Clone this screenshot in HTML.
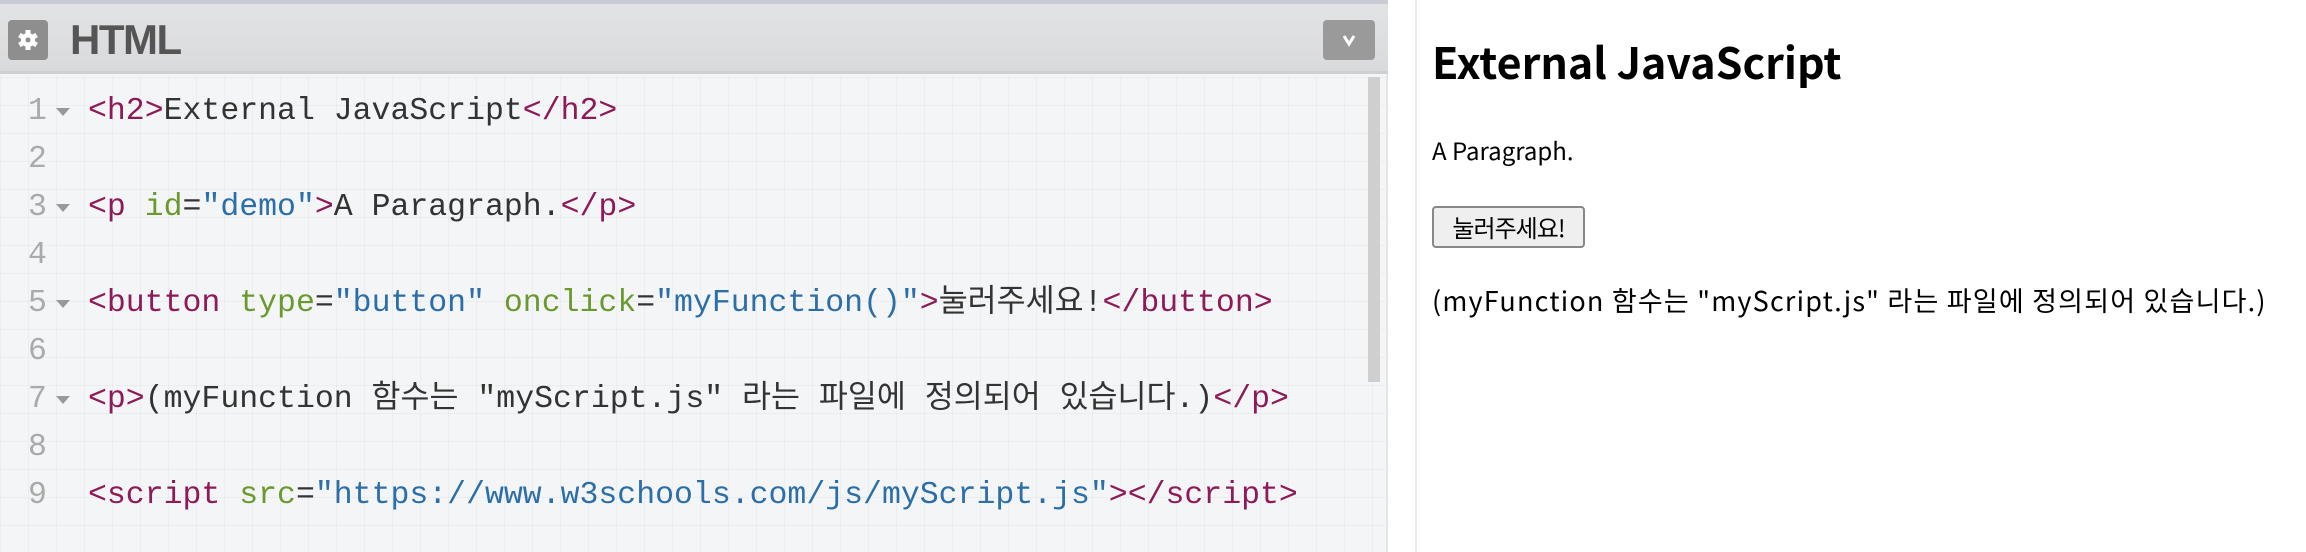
<!DOCTYPE html>
<html><head><meta charset="utf-8">
<style>
*{margin:0;padding:0;box-sizing:border-box}
html,body{width:2306px;height:552px;overflow:hidden;background:#fff;font-family:"Liberation Sans","Noto Sans CJK KR",sans-serif}
#left{position:absolute;left:0;top:0;width:1388px;height:552px;background:#f4f5f7;border-right:2px solid #e3e4e6}
#topline{position:absolute;left:0;top:0;width:1388px;height:4px;background:#c9ccd4}
#hdr{position:absolute;left:0;top:4px;width:1388px;height:70px;background:linear-gradient(#e2e3e5,#d9dadc);border-bottom:3px solid #cfd0d2}
#gear{position:absolute;left:8px;top:16px;width:40px;height:40px;background:#8e8e8e;border-radius:4px}
#title{position:absolute;left:70px;top:12px;font-size:42px;font-weight:bold;color:#555;letter-spacing:-1.5px}
#dd{position:absolute;left:1323px;top:16px;width:52px;height:40px;background:#9a9a9a;border-radius:4px}
#code{position:absolute;left:0;top:77px;width:1386px;height:475px;
background-image:linear-gradient(rgba(0,0,0,.03) 1px,transparent 1px),linear-gradient(90deg,rgba(0,0,0,.03) 1px,transparent 1px);background-size:28px 28px}
.ln{position:absolute;left:0;width:1360px;height:48px;line-height:48px;font-family:"Liberation Mono","Noto Sans CJK KR",monospace;font-size:31.5px;color:#333;white-space:pre}
.n{position:absolute;left:28px;color:#aaa}
.a{position:absolute;left:56px;top:20px;width:0;height:0;border-left:7px solid transparent;border-right:7px solid transparent;border-top:8px solid #999}
.c{position:absolute;left:88px}
.t{color:#8e1a57}.at{color:#6a9a2e}.s{color:#2b6ea8}
#sb{position:absolute;left:1368px;top:77px;width:12px;height:305px;background:#cfcfcf}
#div{position:absolute;left:1415px;top:0;width:2px;height:552px;background:#ececec}
#right{position:absolute;left:1432px;top:0;color:#000}
h2{position:absolute;left:0;top:30px;font-size:43px;font-weight:bold;white-space:nowrap;font-family:"Noto Sans CJK KR","Liberation Sans",sans-serif;letter-spacing:0}
.p{position:absolute;left:0;font-size:24px;white-space:nowrap;font-family:"Noto Sans CJK KR","Liberation Sans",sans-serif}
#btn{position:absolute;left:0;top:206px;width:153px;height:42px;border:2px solid #888;border-radius:4px;background:#efefef;font-size:24px;text-align:center;line-height:38px;font-family:"Noto Sans CJK KR",sans-serif;letter-spacing:-1px}
</style></head><body>
<div id="left">
<div id="topline"></div>
<div id="hdr"><div id="gear"><svg width="40" height="40" viewBox="0 0 40 40"><g fill="#fff" transform="translate(20 20)"><circle r="7"/><rect x="-2.5" y="-10" width="5" height="20"/><rect x="-2.5" y="-10" width="5" height="20" transform="rotate(60)"/><rect x="-2.5" y="-10" width="5" height="20" transform="rotate(120)"/></g><circle cx="20" cy="20" r="2.5" fill="#8e8e8e"/></svg></div><div id="title">HTML</div>
<div id="dd"><svg width="52" height="40"><path d="M21 16 L26 24 L31 16" stroke="#fff" stroke-width="3" fill="none"/></svg></div></div>
<div id="code">
<div class="ln" style="top:11px"><span class="n">1</span><span class="a"></span><span class="c"><span class="t">&lt;h2&gt;</span>External JavaScript<span class="t">&lt;/h2&gt;</span></span></div>
<div class="ln" style="top:59px"><span class="n">2</span></div>
<div class="ln" style="top:107px"><span class="n">3</span><span class="a"></span><span class="c"><span class="t">&lt;p</span> <span class="at">id</span>=<span class="s">"demo"</span><span class="t">&gt;</span>A Paragraph.<span class="t">&lt;/p&gt;</span></span></div>
<div class="ln" style="top:155px"><span class="n">4</span></div>
<div class="ln" style="top:203px"><span class="n">5</span><span class="a"></span><span class="c"><span class="t">&lt;button</span> <span class="at">type</span>=<span class="s">"button"</span> <span class="at">onclick</span>=<span class="s">"myFunction()"</span><span class="t">&gt;</span>눌러주세요!<span class="t">&lt;/button&gt;</span></span></div>
<div class="ln" style="top:251px"><span class="n">6</span></div>
<div class="ln" style="top:299px"><span class="n">7</span><span class="a"></span><span class="c"><span class="t">&lt;p&gt;</span>(myFunction 함수는 "myScript.js" 라는 파일에 정의되어 있습니다.)<span class="t">&lt;/p&gt;</span></span></div>
<div class="ln" style="top:347px"><span class="n">8</span></div>
<div class="ln" style="top:395px"><span class="n">9</span><span class="c"><span class="t">&lt;script</span> <span class="at">src</span>=<span class="s">"https://www.w3schools.com/js/myScript.js"</span><span class="t">&gt;&lt;/script&gt;</span></span></div>
</div>
<div id="sb"></div>
</div>
<div id="div"></div>
<div id="right">
<h2>External JavaScript</h2>
<div class="p" style="top:132px">A Paragraph.</div>
<div id="btn">눌러주세요!</div>
<div class="p" style="top:280px;font-size:27px;letter-spacing:1.2px">(myFunction 함수는 "myScript.js" 라는 파일에 정의되어 있습니다.)</div>
</div>
</body></html>
